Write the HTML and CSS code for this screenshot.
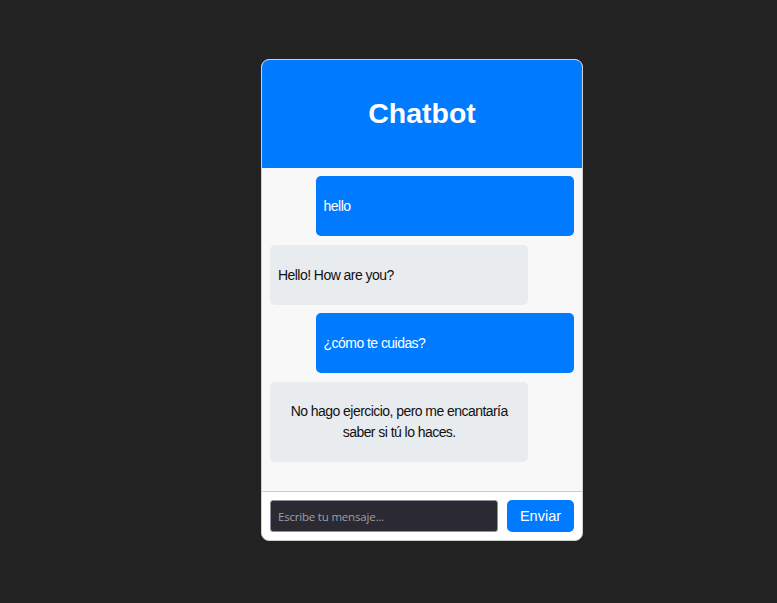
FILE: index.html
```html
<!DOCTYPE html>
<html lang="es">
<head>
<meta charset="utf-8">
<title>Chatbot</title>
<link rel="stylesheet" href="styles.css">
</head>
<body>
<div class="chat">
  <header class="chat-header"><h1>Chatbot</h1></header>
  <div class="messages">
    <div class="msg user">hello</div>
    <div class="msg bot">Hello! How are you?</div>
    <div class="msg user">¿cómo te cuidas?</div>
    <div class="msg bot center">No hago ejercicio, pero me encantaría saber si tú lo haces.</div>
  </div>
  <form class="composer">
    <input class="input" type="text" placeholder="Escribe tu mensaje...">
    <button class="send" type="button">Enviar</button>
  </form>
</div>
</body>
</html>
```
FILE: styles.css
```css
html, body { margin: 0; padding: 0; }
body {
  background: #222222;
  font-family: "Liberation Sans", Arial, sans-serif;
  height: 603px;
}
.chat {
  margin: 59px 0 0 261px;
  width: 320px;
  border: 1px solid #cfcfcf;
  border-radius: 8px;
  overflow: hidden;
  background: #ffffff;
}
.chat-header {
  background: #007bff;
  height: 108px;
  display: flex;
  align-items: center;
  justify-content: center;
}
.chat-header h1 {
  margin: 0;
  color: #ffffff;
  font-size: 28.5px;
  font-weight: bold;
  line-height: 32px;
  position: relative;
  top: -1px;
}
.messages {
  background: #f8f8f8;
  height: 323px;
  box-sizing: border-box;
  padding: 8px;
  display: flex;
  flex-direction: column;
  gap: 8.5px;
}
.msg {
  width: 85%;
  box-sizing: border-box;
  padding: 20px 8px;
  font-family: "Liberation Sans", Arial, sans-serif;
  font-size: 14px;
  letter-spacing: -0.55px;
  line-height: 20px;
  border-radius: 5px;
}
.msg.user {
  align-self: flex-end;
  background: #007bff;
  color: #ffffff;
}
.msg.bot {
  align-self: flex-start;
  background: #e9ecef;
  color: #111111;
}
.msg.center { text-align: center; padding: 19px 8px 19px; line-height: 21px; }
.composer {
  margin: 0;
  border-top: 1px solid #cccccc;
  padding: 8px;
  display: flex;
  gap: 9px;
}
.input {
  flex: 1;
  height: 32px;
  box-sizing: border-box;
  background: #2b2a33;
  border: 1px solid #8f8f9d;
  border-radius: 3px;
  padding: 0 7px;
  color: #fbfbfe;
  font-family: "Open Sans", "DejaVu Sans", sans-serif;
  font-size: 11.5px;
  letter-spacing: -0.2px;
  outline: none;
}
.input::placeholder { color: #9e9ea6; }
.send {
  width: 67px;
  height: 32px;
  background: #007bff;
  color: #ffffff;
  border: none;
  border-radius: 5px;
  font-family: "Liberation Sans", Arial, sans-serif;
  font-size: 14.5px;
  padding: 0;
}
```
